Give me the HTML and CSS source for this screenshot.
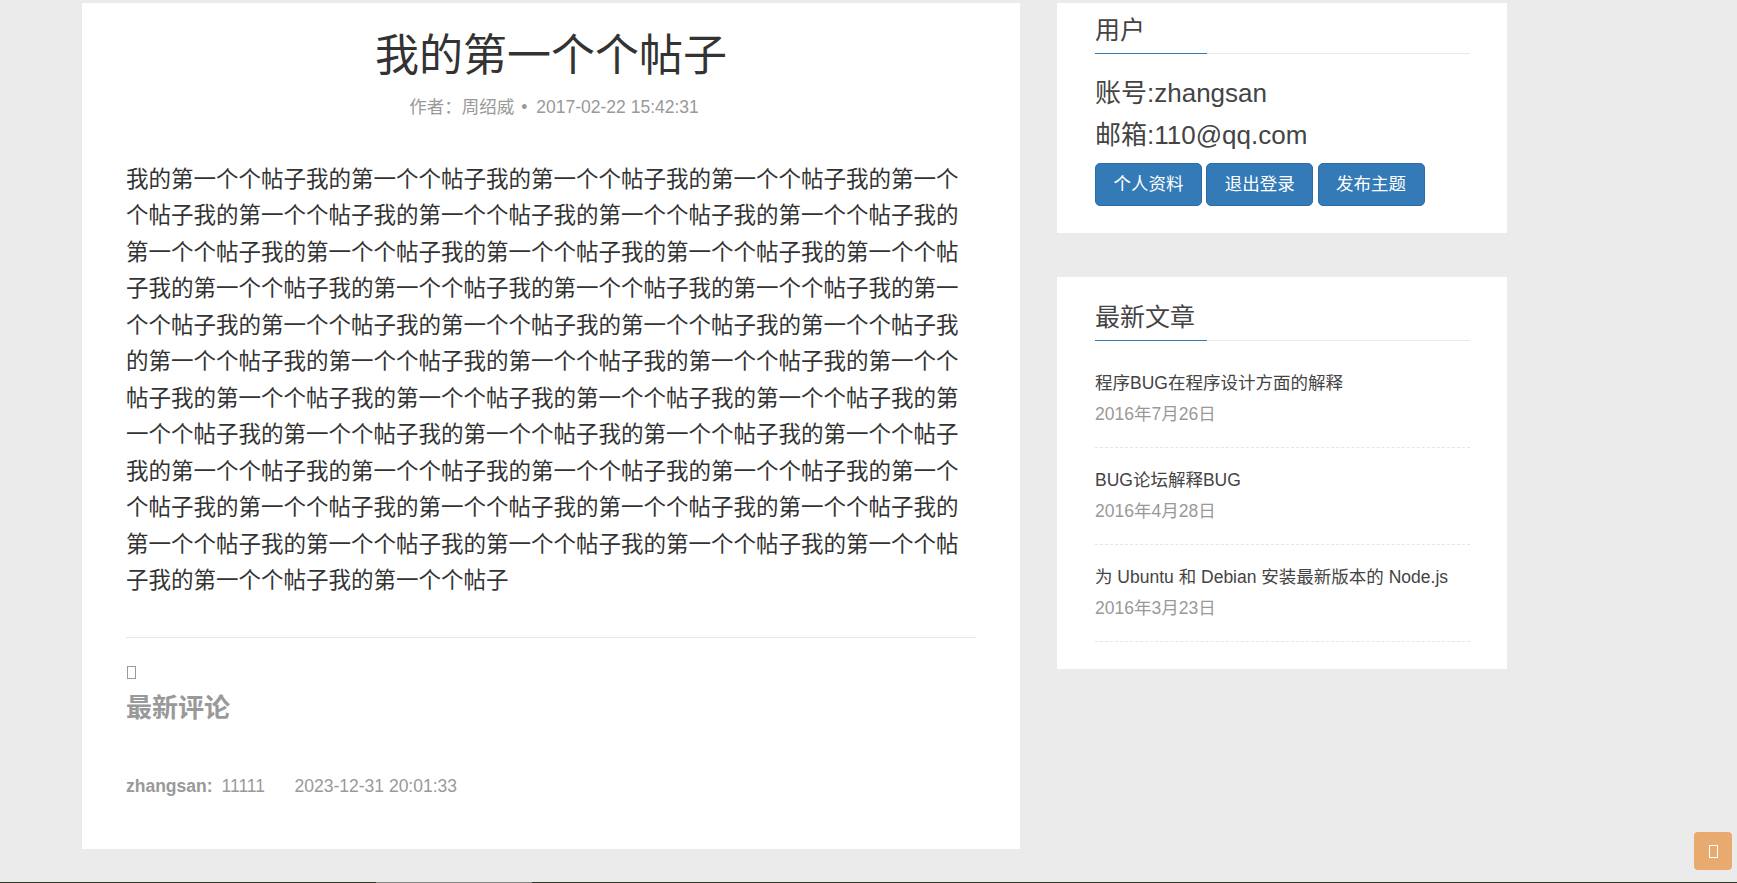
FILE: index.html
```html
<!DOCTYPE html>
<html lang="zh-CN">
<head>
<meta charset="utf-8">
<title>我的第一个个帖子</title>
<link rel="stylesheet" href="styles.css">
</head>
<body>
<div class="page">
  <main class="post-card">
    <h1 class="post-title">我的第一个个帖子</h1>
    <div class="post-meta"><span class="author">作者：周绍威</span><span class="dot">•</span><span class="time">2017-02-22 15:42:31</span></div>
    <div class="post-body">我的第一个个帖子我的第一个个帖子我的第一个个帖子我的第一个个帖子我的第一个个帖子我的第一个个帖子我的第一个个帖子我的第一个个帖子我的第一个个帖子我的第一个个帖子我的第一个个帖子我的第一个个帖子我的第一个个帖子我的第一个个帖子我的第一个个帖子我的第一个个帖子我的第一个个帖子我的第一个个帖子我的第一个个帖子我的第一个个帖子我的第一个个帖子我的第一个个帖子我的第一个个帖子我的第一个个帖子我的第一个个帖子我的第一个个帖子我的第一个个帖子我的第一个个帖子我的第一个个帖子我的第一个个帖子我的第一个个帖子我的第一个个帖子我的第一个个帖子我的第一个个帖子我的第一个个帖子我的第一个个帖子我的第一个个帖子我的第一个个帖子我的第一个个帖子我的第一个个帖子我的第一个个帖子我的第一个个帖子我的第一个个帖子我的第一个个帖子我的第一个个帖子我的第一个个帖子我的第一个个帖子我的第一个个帖子我的第一个个帖子我的第一个个帖子我的第一个个帖子我的第一个个帖子我的第一个个帖子</div>
    <hr class="divider">
    <div class="icon-line"><span class="tofu"></span></div>
    <h4 class="comments-title">最新评论</h4>
    <div class="comment"><span class="c-user">zhangsan:</span><span class="c-text">11111</span><span class="c-time">2023-12-31 20:01:33</span></div>
  </main>
  <aside class="sidebar">
    <section class="widget widget-user">
      <h3 class="widget-title">用户</h3>
      <div class="user-info">
        <div>账号:zhangsan</div>
        <div>邮箱:110@qq.com</div>
      </div>
      <div class="btns">
        <a class="btn">个人资料</a>
        <a class="btn">退出登录</a>
        <a class="btn">发布主题</a>
      </div>
    </section>
    <section class="widget widget-news">
      <h3 class="widget-title">最新文章</h3>
      <ul class="news">
        <li><div class="news-title">程序BUG在程序设计方面的解释</div><div class="news-date">2016年7月26日</div></li>
        <li><div class="news-title">BUG论坛解释BUG</div><div class="news-date">2016年4月28日</div></li>
        <li><div class="news-title">为 Ubuntu 和 Debian 安装最新版本的 Node.js</div><div class="news-date">2016年3月23日</div></li>
      </ul>
    </section>
  </aside>
</div>
<a class="to-top"><span class="tofu-white"></span></a>
<div class="hscroll"><div class="hscroll-thumb"></div></div>
</body>
</html>
```

FILE: styles.css
```css
html, body {
  margin: 0;
  padding: 0;
}
body {
  background: #ebebeb;
  font-family: "Liberation Sans", "Noto Sans CJK SC", sans-serif;
  color: #333;
  overflow: hidden;
  height: 883px;
}
.page {
  display: flex;
  align-items: flex-start;
  gap: 37px;
  padding: 3px 0 0 82px;
}

/* main post card */
.post-card {
  width: 938px;
  box-sizing: border-box;
  background: #fff;
  padding: 27px 44px 49.8px;
}
.post-title {
  margin: 0;
  text-align: center;
  font-size: 44px;
  line-height: 52px;
  font-weight: normal;
  color: #333;
}
.post-meta {
  margin-top: 13px;
  text-align: center;
  font-size: 17.5px;
  line-height: 25px;
  color: #999;
  padding-left: 6px;
}
.dot { margin-left: 7px; }
.time { margin-left: 9px; }
.post-body {
  margin-top: 41.75px;
  font-size: 22.5px;
  line-height: 36.5px;
  color: #333;
  word-break: break-all;
}
.divider {
  margin: 37.25px 0 0;
  border: 0;
  height: 1px;
  background: #e8e8e8;
}
.icon-line {
  margin-top: 21.5px;
  height: 25px;
  display: flex;
  align-items: center;
}
.tofu {
  display: inline-block;
  width: 7px;
  height: 11px;
  border: 1px solid #9a9a9a;
  margin-left: 1px;
}
.comments-title {
  margin: 5px 0 0;
  font-size: 26px;
  line-height: 36px;
  font-weight: bold;
  color: #999;
}
.comment {
  margin-top: 48.7px;
  font-size: 17.5px;
  line-height: 25px;
  color: #999;
}
.c-user { font-weight: bold; }
.c-text { margin-left: 9px; }
.c-time { margin-left: 29.5px; }

/* sidebar */
.sidebar {
  width: 450px;
  display: flex;
  flex-direction: column;
  gap: 43.7px;
}
.widget {
  background: #fff;
  padding: 23.5px 38px 27px;
}
.widget-user {
  padding-top: 9.5px;
  padding-bottom: 26.7px;
}
.widget-title {
  margin: 0;
  font-size: 25px;
  line-height: 35px;
  font-weight: normal;
  color: #444;
  padding-bottom: 6px;
  width: 375px;
  background:
    linear-gradient(#337ab7, #337ab7) left bottom / 112px 1px no-repeat,
    linear-gradient(#eaeaea, #eaeaea) left bottom / 100% 1px no-repeat;
}
.user-info {
  margin-top: 18.5px;
  font-size: 26px;
  line-height: 42px;
  color: #444;
}
.btns {
  display: flex;
  gap: 4.3px;
  margin-top: 7.3px;
}
.btn {
  display: block;
  padding: 8px 17.5px;
  border: 1px solid #2e6da4;
  background: #337ab7;
  color: #fff;
  font-size: 17.5px;
  line-height: 25px;
  border-radius: 5px;
}
.news {
  list-style: none;
  margin: 10.3px 0 0;
  padding: 0;
  width: 375px;
}
.news li {
  padding: 20px 0;
  border-bottom: 1px dashed #e6e6e6;
}
.news-title {
  font-size: 17.5px;
  line-height: 25px;
  color: #444;
}
.news-date {
  margin-top: 6px;
  font-size: 17.5px;
  line-height: 25px;
  color: #999;
}

/* floating back-to-top */
.to-top {
  position: fixed;
  right: 5px;
  bottom: 13px;
  width: 38px;
  height: 38px;
  border-radius: 4px;
  background: #e9aa6f;
  display: flex;
  align-items: center;
  justify-content: center;
}
.tofu-white {
  display: block;
  width: 7px;
  height: 11px;
  border: 1.5px solid #fff;
}

/* bottom scrollbar strip */
.hscroll {
  position: fixed;
  left: 0;
  right: 0;
  bottom: 0;
  height: 1px;
  background: #2f3328;
}
.hscroll-thumb {
  margin-left: 376px;
  width: 156px;
  height: 1px;
  background: #858583;
}
```
